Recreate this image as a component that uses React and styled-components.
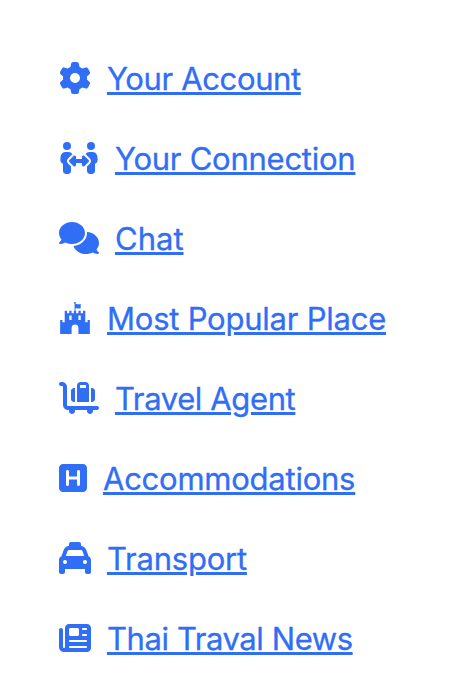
import React from 'react';
import styled, { createGlobalStyle } from 'styled-components';
import { FaGear, FaPeopleArrows, FaComments, FaFortAwesome, FaCartFlatbedSuitcase, FaSquareH, FaTaxi, FaNewspaper } from 'react-icons/fa6';

const GlobalStyle = createGlobalStyle`
  body { margin: 0; background: #fff; }
`;

const Menu = styled.nav`
  display: flex;
  flex-direction: column;
  gap: 32px;
  padding: 54px 0 0 59px;
  font-family: Inter, sans-serif;
  font-size: 31px;
  line-height: 48px;
  color: #306ef6;
`;

const Item = styled.div`
  display: flex;
  align-items: center;
  height: 48px;
`;

const Icon = styled.span`
  display: flex;
  flex: none;
  width: ${(p) => p.$width}px;
  height: 32px;
  margin-right: 16px;
  svg { width: 100%; height: 100%; }
`;

const Link = styled.a`
  padding-top: 2px;
  color: inherit;
  letter-spacing: ${(p) => p.$spacing}px;
  white-space: nowrap;
  -webkit-text-stroke: 0.3px currentColor;
  text-decoration: underline;
  text-decoration-thickness: 3px;
  text-underline-offset: 2px;
`;

const items = [
  { label: 'Your Account', icon: FaGear, width: 32, spacing: -0.36 },
  { label: 'Your Connection', icon: FaPeopleArrows, width: 40, spacing: -0.25 },
  { label: 'Chat', icon: FaComments, width: 40, spacing: 0 },
  { label: 'Most Popular Place', icon: FaFortAwesome, width: 32, spacing: -0.23 },
  { label: 'Travel Agent', icon: FaCartFlatbedSuitcase, width: 40, spacing: -0.38 },
  { label: 'Accommodations', icon: FaSquareH, width: 28, spacing: -0.24 },
  { label: 'Transport', icon: FaTaxi, width: 32, spacing: -0.22 },
  { label: 'Thai Traval News', icon: FaNewspaper, width: 32, spacing: -0.42 },
];

export default function App() {
  return (
    <>
      <GlobalStyle />
      <Menu>
        {items.map(({ label, icon: Glyph, width, spacing }) => (
          <Item key={label}>
            <Icon $width={width}><Glyph /></Icon>
            <Link href="#" $spacing={spacing}>{label}</Link>
          </Item>
        ))}
      </Menu>
    </>
  );
}
